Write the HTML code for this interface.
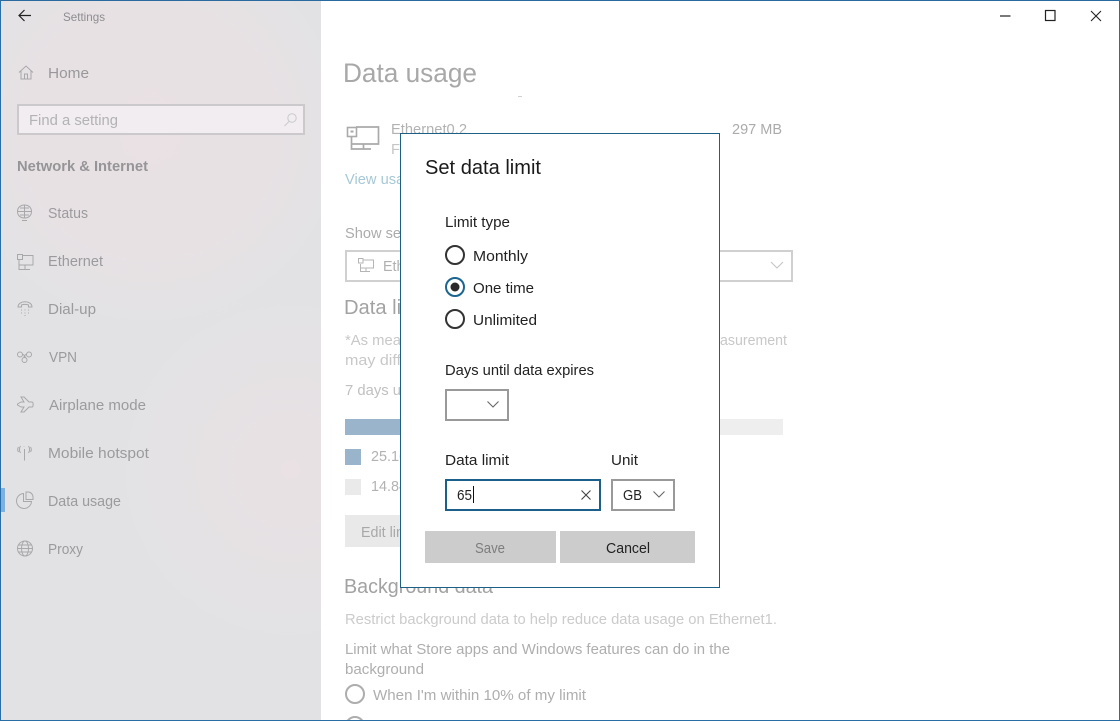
<!DOCTYPE html>
<html><head><meta charset="utf-8"><title>Settings</title>
<style>
html,body{margin:0;padding:0;background:#fff;width:1120px;height:721px;overflow:hidden}
svg{display:block;font-family:"Liberation Sans",sans-serif}
.i{fill:none;stroke:#a8a8aa;stroke-width:1}
</style></head><body>
<svg width="1120" height="721" viewBox="0 0 1120 721" xmlns="http://www.w3.org/2000/svg">
<defs>
<radialGradient id="p1" gradientUnits="userSpaceOnUse" cx="150" cy="130" r="200">
<stop offset="0" stop-color="#e9e1e4"/><stop offset="0.6" stop-color="#e9e1e4" stop-opacity="0.8"/><stop offset="1" stop-color="#e9e1e4" stop-opacity="0"/>
</radialGradient>
<radialGradient id="p2" gradientUnits="userSpaceOnUse" cx="290" cy="470" r="180">
<stop offset="0" stop-color="#e9e1e4"/><stop offset="1" stop-color="#e9e1e4" stop-opacity="0"/>
</radialGradient>
</defs>
<rect width="1120" height="721" fill="#fff"/>
<rect x="0" y="0" width="321" height="721" fill="#e2e2e5"/>
<rect x="0" y="0" width="321" height="721" fill="url(#p1)"/>
<rect x="0" y="0" width="321" height="721" fill="url(#p2)"/>

<!-- title -->
<path d="M19 15.500H31M24.500 10L19 15.500L24.500 21" fill="none" stroke="#222" stroke-width="1.200"/>
<text x="63" y="21" font-size="12" fill="#8d8d8f" textLength="42" lengthAdjust="spacingAndGlyphs">Settings</text>

<!-- sidebar -->
<path class="i" d="M19 72.500L26 66L33 72.500M21 70.500V79H31V70.500M24.500 79V74H27.500V79"/>
<text x="48" y="78" font-size="15" fill="#98989a" textLength="41" lengthAdjust="spacingAndGlyphs">Home</text>
<rect x="18" y="105" width="286" height="29" fill="#f1edf0" stroke="#cbc9cc" stroke-width="2"/>
<text x="29" y="125" font-size="15" fill="#b3b2b4" textLength="89" lengthAdjust="spacingAndGlyphs">Find a setting</text>
<circle cx="292" cy="118" r="4.200" fill="none" stroke="#cbcacc"/><path d="M289 121.500L284.500 126" stroke="#cbcacc"/>
<text x="17" y="171" font-size="15" font-weight="bold" fill="#959597" textLength="131" lengthAdjust="spacingAndGlyphs">Network &amp; Internet</text>

<g class="i">
<path d="M17.500 211.500C17.500 207 21 205 24.500 205S31.500 207 31.500 211.500S28 218 24.500 218S17.500 216 17.500 211.500ZM17.500 211.500H31.500M24.500 205V218M20 208H29M20 215H29M22 220.500H27"/>
<rect x="17.500" y="254.500" width="5" height="5"/>
<path d="M23 255.500H33V265H19M19 260V269.500H30M25 265V269.500"/>
<path d="M18 307C18 300 32 300 32 307H28.500V305C26.500 304.300 23.500 304.300 21.500 305V307Z"/>
<path d="M21 310H22M24.500 310H25.500M28 310H29M21 313H22M24.500 313H25.500M28 313H29M24.500 315.500H25.500"/>
<circle cx="20" cy="354.500" r="2.500"/><circle cx="29" cy="354.500" r="2.500"/><circle cx="24.500" cy="360" r="2.500"/>
<path d="M22.500 354.500C25 354.500 25 358 26 358M26.500 354.500C25 354.500 24 356 24 357.500"/>
<path d="M17.500 404L21 402H24L21 397H24L29 402H32C33.500 402 33.500 407 32 407H29L24 412H21L24 407H21L17.500 405Z"/>
<path d="M24.500 449V460.500M24 446.500V447M20.500 446C19 448 19 451 20.500 453M28.500 446C30 448 30 451 28.500 453M18.500 447C17.500 448.500 17.500 450.500 18.500 452M30.500 447C31.500 448.500 31.500 450.500 30.500 452"/>
<path d="M23.500 493.500A7.500 7.500 0 1 0 31.500 501.500H23.500ZM26 492H28A5 5 0 0 1 33 497V499.500H26Z"/>
<circle cx="25" cy="548.500" r="7.500"/><ellipse cx="25" cy="548.500" rx="3.500" ry="7.500"/><path d="M17.500 548.500H32.500M18.500 545H31.500M18.500 552H31.500"/>
</g>
<rect x="0" y="488" width="5" height="24" fill="#7fb0de"/>

<g font-size="15" fill="#9b9b9d">
<text x="48" y="218" textLength="40" lengthAdjust="spacingAndGlyphs">Status</text>
<text x="48" y="266" textLength="55" lengthAdjust="spacingAndGlyphs">Ethernet</text>
<text x="48" y="314" textLength="48" lengthAdjust="spacingAndGlyphs">Dial-up</text>
<text x="49" y="362" textLength="28" lengthAdjust="spacingAndGlyphs">VPN</text>
<text x="49" y="410" textLength="97" lengthAdjust="spacingAndGlyphs">Airplane mode</text>
<text x="48" y="458" textLength="101" lengthAdjust="spacingAndGlyphs">Mobile hotspot</text>
<text x="48" y="506" textLength="73" lengthAdjust="spacingAndGlyphs">Data usage</text>
<text x="48" y="554" textLength="35" lengthAdjust="spacingAndGlyphs">Proxy</text>
</g>

<!-- window controls -->
<path d="M1000 16H1010.500" stroke="#222" stroke-width="1.200"/>
<rect x="1045.500" y="10.500" width="9.500" height="10" fill="none" stroke="#222" stroke-width="1.200"/>
<path d="M1091 11L1101 21M1101 11L1091 21" stroke="#222" stroke-width="1.100"/>

<!-- main content -->
<text x="343" y="82" font-size="27" fill="#a8a8a8" textLength="134" lengthAdjust="spacingAndGlyphs">Data usage</text>
<path d="M518 96.500H522" stroke="#d0d0d0"/>
<path d="M356 127H378.500V144H352M351.500 136V149H371M363.500 144V149" fill="none" stroke="#aaa" stroke-width="1.700"/>
<rect x="347.500" y="127.500" width="9" height="9" fill="#fff" stroke="#aaa" stroke-width="1.600"/><rect x="350.500" y="130.500" width="3" height="2" fill="#aaa"/>
<text x="391" y="134" font-size="15" fill="#b2b2b2" textLength="76" lengthAdjust="spacingAndGlyphs">Ethernet0.2</text>
<text x="391" y="154" font-size="15" fill="#c6c6c6" textLength="14" lengthAdjust="spacingAndGlyphs">Fr</text>
<text x="732" y="134" font-size="15" fill="#ababab" textLength="50" lengthAdjust="spacingAndGlyphs">297 MB</text>
<text x="345" y="184" font-size="15" fill="#a6c8d6" textLength="122" lengthAdjust="spacingAndGlyphs">View usage details</text>
<text x="345" y="238" font-size="15" fill="#ababab" textLength="112" lengthAdjust="spacingAndGlyphs">Show settings for</text>
<rect x="346" y="251" width="446" height="30" fill="#fff" stroke="#d0d0d0" stroke-width="2"/>
<path d="M363 260H373.500V268H360.500M360.500 264V271.500H370M366 268V271.500" fill="none" stroke="#b5b5b5"/>
<rect x="358.500" y="258.500" width="4.500" height="4.500" fill="#fff" stroke="#b5b5b5"/>
<text x="383" y="271" font-size="15" fill="#b0b0b0" textLength="62" lengthAdjust="spacingAndGlyphs">Ethernet1</text>
<path d="M771 262L777 268L783 262" fill="none" stroke="#c5c5c5" stroke-width="1.100"/>
<text x="344" y="314" font-size="20" fill="#a2a2a2" textLength="84" lengthAdjust="spacingAndGlyphs">Data limit</text>
<text x="345" y="345" font-size="15" fill="#c8c8c8" textLength="56" lengthAdjust="spacingAndGlyphs">*As mea</text>
<text x="720" y="345" font-size="15" fill="#c8c8c8" textLength="67" lengthAdjust="spacingAndGlyphs">asurement</text>
<text x="345" y="365" font-size="15" fill="#c8c8c8" textLength="56" lengthAdjust="spacingAndGlyphs">may diff</text>
<text x="345" y="395" font-size="15" fill="#c0c0c0" textLength="56" lengthAdjust="spacingAndGlyphs">7 days u</text>
<rect x="345" y="419" width="438" height="16" fill="#eeeeee"/>
<rect x="345" y="419" width="276" height="16" fill="#9ab4cb"/>
<rect x="345" y="449" width="16" height="16" fill="#9ab4cb"/>
<rect x="345" y="479" width="16" height="16" fill="#eaeaea"/>
<text x="371" y="461" font-size="15" fill="#b2b2b2" textLength="36" lengthAdjust="spacingAndGlyphs">25.16</text>
<text x="371" y="491" font-size="15" fill="#b2b2b2" textLength="36" lengthAdjust="spacingAndGlyphs">14.84</text>
<rect x="345" y="515" width="90" height="32" fill="#e9e9e9"/>
<text x="361" y="537" font-size="15" fill="#a8a8a8" textLength="54" lengthAdjust="spacingAndGlyphs">Edit limit</text>
<text x="344" y="593" font-size="20" fill="#a2a2a2" textLength="149" lengthAdjust="spacingAndGlyphs">Background data</text>
<text x="345" y="624" font-size="15" fill="#cbcbcb" textLength="432" lengthAdjust="spacingAndGlyphs">Restrict background data to help reduce data usage on Ethernet1.</text>
<text x="345" y="654" font-size="15" fill="#aeaeae" textLength="385" lengthAdjust="spacingAndGlyphs">Limit what Store apps and Windows features can do in the</text>
<text x="345" y="674" font-size="15" fill="#aeaeae" textLength="79" lengthAdjust="spacingAndGlyphs">background</text>
<circle cx="355" cy="694" r="9" fill="none" stroke="#adadad" stroke-width="2"/>
<text x="373" y="700" font-size="15" fill="#aeaeae" textLength="213" lengthAdjust="spacingAndGlyphs">When I'm within 10% of my limit</text>
<circle cx="355" cy="726" r="9" fill="none" stroke="#adadad" stroke-width="2"/>

<!-- window border -->
<rect x="0" y="0" width="1120" height="1" fill="#2a6a9e"/>
<rect x="0" y="0" width="1" height="721" fill="#2a6ea8"/>
<rect x="0" y="720" width="1120" height="1" fill="#2a6ea8"/>
<rect x="1119" y="0" width="1" height="721" fill="#2a6ea8"/>

<!-- dialog -->
<rect x="400.500" y="133.500" width="319" height="454" fill="#fff" stroke="#1f5f85" stroke-width="1"/>
<text x="425" y="174" font-size="20" fill="#1a1a1a" textLength="116" lengthAdjust="spacingAndGlyphs">Set data limit</text>
<circle cx="455" cy="255" r="9" fill="none" stroke="#333" stroke-width="2"/>
<circle cx="455" cy="287" r="9" fill="none" stroke="#1c6590" stroke-width="2"/>
<circle cx="455" cy="287" r="4.500" fill="#2a2a2a"/>
<circle cx="455" cy="319" r="9" fill="none" stroke="#333" stroke-width="2"/>
<rect x="446" y="390" width="62" height="30" fill="#fff" stroke="#999" stroke-width="2"/>
<path d="M487.500 401.500L493 407L498.500 401.500" fill="none" stroke="#666" stroke-width="1.100"/>
<rect x="446" y="480" width="154" height="30" fill="#fff" stroke="#1c5f8a" stroke-width="2"/>
<path d="M473.500 486V503" stroke="#111" stroke-width="1"/>
<path d="M581.500 490.500L590.500 499.500M590.500 490.500L581.500 499.500" stroke="#444" stroke-width="1.100"/>
<rect x="612" y="480" width="62" height="30" fill="#fff" stroke="#999" stroke-width="2"/>
<path d="M653.500 491.500L659 497L664.500 491.500" fill="none" stroke="#666" stroke-width="1.100"/>
<rect x="425" y="531" width="131" height="32" fill="#cccccc"/>
<rect x="560" y="531" width="135" height="32" fill="#cccccc"/>
<g font-size="15" fill="#222">
<text x="445" y="227" textLength="65" lengthAdjust="spacingAndGlyphs">Limit type</text>
<text x="473" y="261" textLength="55" lengthAdjust="spacingAndGlyphs">Monthly</text>
<text x="473" y="293" textLength="61" lengthAdjust="spacingAndGlyphs">One time</text>
<text x="473" y="325" textLength="64" lengthAdjust="spacingAndGlyphs">Unlimited</text>
<text x="445" y="375" textLength="149" lengthAdjust="spacingAndGlyphs">Days until data expires</text>
<text x="445" y="465" textLength="64" lengthAdjust="spacingAndGlyphs">Data limit</text>
<text x="611" y="465" textLength="27" lengthAdjust="spacingAndGlyphs">Unit</text>
<text x="457" y="500" textLength="15" lengthAdjust="spacingAndGlyphs">65</text>
<text x="623" y="500" textLength="19" lengthAdjust="spacingAndGlyphs">GB</text>
<text x="606" y="553" textLength="44" lengthAdjust="spacingAndGlyphs">Cancel</text>
</g>
<text x="475" y="553" font-size="15" fill="#7d7d7d" textLength="30" lengthAdjust="spacingAndGlyphs">Save</text>
</svg>
</body></html>
